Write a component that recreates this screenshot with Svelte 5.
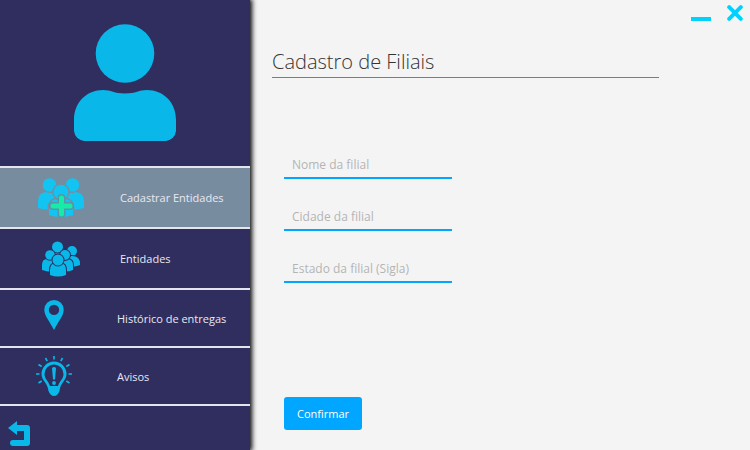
<script>
  const fields = [
    { id: 'nome', label: 'Nome da filial' },
    { id: 'cidade', label: 'Cidade da filial' },
    { id: 'estado', label: 'Estado da filial (Sigla)' }
  ];
</script>

<div class="window">
  <aside class="sidebar">
    <div class="avatar">
      <svg width="102" height="118" viewBox="0 0 102 118" aria-hidden="true">
        <circle cx="51" cy="29.500" r="29.300" />
        <path d="M0 96C0 78 13 66 29 66c8 0 11 3.500 22 3.500S65 66 73 66c16 0 29 12 29 30v11q-1 8-10 10H10q-9-2-10-10z" />
      </svg>
    </div>

    <nav>
      <button type="button" class="item active">
        <span class="icon">
          <svg width="48" height="40" viewBox="0 0 48 40" aria-hidden="true">
            <g class="bright">
              <circle cx="12.500" cy="7" r="6.800" />
              <circle cx="35.500" cy="7" r="6.800" />
              <path d="M1 30V23q0-8 8-9 4 2 8 0l3 2v15q-10 2-19-1z" />
              <path d="M47 30V23q0-8-8-9-4 2-8 0l-3 2v15q10 2 19-1z" />
            </g>
            <g class="bright cut-active">
              <path d="M12 37v-7q0-7 7-9 5 2 10 0 7 2 7 9v7q-12 4-24 0z" />
              <circle cx="24" cy="14" r="7.300" />
            </g>
            <path class="plus-edge" d="M24.500 20v16M16 28h17" />
            <path class="plus" d="M24.500 20v16M16 28h17" />
          </svg>
        </span>
        <span class="label">Cadastrar Entidades</span>
      </button>
      <button type="button" class="item">
        <span class="icon">
          <svg width="38" height="36" viewBox="0 0 38 36" aria-hidden="true">
            <g class="cut">
              <circle cx="30" cy="10" r="5" />
              <path d="M24 25v-5q1-5 6-5 8 0 8 8v1q-6 3-14 1z" />
              <path d="M9 18q1-7 6-7 6 0 7 7z" />
              <circle cx="15.500" cy="6" r="5.500" />
              <path d="M0 29v-5q0-6 5-6h6q5 1 5 6v6q-8 2-16-1z" />
              <circle cx="8" cy="14" r="4.800" />
              <path d="M15 29v-5q1-6 5-6h6q5 1 5 6v5q-8 3-16 0z" />
              <circle cx="23" cy="14" r="5" />
              <path d="M8 34v-5q0-6 5-7h6q5 1 5 7v5q-8 3-16 0z" />
              <circle cx="16" cy="19" r="5.500" />
            </g>
          </svg>
        </span>
        <span class="label">Entidades</span>
      </button>
      <button type="button" class="item compact">
        <span class="icon pin">
          <svg width="20" height="30" viewBox="0 0 20 30" aria-hidden="true">
            <path fill-rule="evenodd" d="M10 0a9.700 9.700 0 0 0-9.700 9.700C.3 16 6 21.500 10 30c4-8.500 9.700-14 9.700-20.300A9.700 9.700 0 0 0 10 0zm0 4.700a5.200 5.200 0 1 1 0 10.400 5.200 5.200 0 0 1 0-10.400z" />
          </svg>
        </span>
        <span class="label">Histórico de entregas</span>
      </button>
      <button type="button" class="item compact">
        <span class="icon">
          <svg width="36" height="40" viewBox="0 0 36 40" aria-hidden="true">
            <path fill-rule="evenodd" d="M18 5.500a12.500 12.500 0 0 0-12.500 12.500c0 7 6 8 7 17q2 5 5.500 5t5.500-5c1-9 7-10 7-17A12.500 12.500 0 0 0 18 5.500zm0 3a9.500 9.500 0 0 1 9.500 9.500c0 5-4 7-5.500 12h-8c-1.500-5-5.500-7-5.500-12A9.500 9.500 0 0 1 18 8.500z" />
            <path d="M16 12q2-2 4 0l-1 11.500h-2z" />
            <circle cx="18" cy="27" r="1.900" />
            <path class="rays" d="M18 0v3.500M9.500 2l1.700 3.200M26.500 2l-1.700 3.200M2.500 8.500l3.200 2M33.500 8.500l-3.200 2M0 18h3.500M36 18h-3.500M2.500 27l3.200-2M33.500 27l-3.200-2" />
          </svg>
        </span>
        <span class="label">Avisos</span>
      </button>
    </nav>

    <button type="button" class="back" aria-label="Voltar">
      <svg width="22" height="26" viewBox="0 0 22 26" aria-hidden="true">
        <path d="M0 7l9-7v4h10q3 0 3 3v15q0 3-3 3H5q-3 0-3-3t3-3h11v-9H9v4z" />
      </svg>
    </button>
  </aside>

  <main>
    <div class="controls">
      <button type="button" class="minimize" aria-label="Minimizar">
        <svg width="20" height="16" viewBox="0 0 20 16" aria-hidden="true"><path d="M0 12h20v4H0z" /></svg>
      </button>
      <button type="button" aria-label="Fechar">
        <svg width="16" height="16" viewBox="0 0 16 16" aria-hidden="true">
          <path class="cross" d="M2.200 2.200l11.600 11.600M13.800 2.200L2.200 13.800" />
        </svg>
      </button>
    </div>

    <h1>Cadastro de Filiais</h1>

    <form onsubmit={(event) => event.preventDefault()}>
      {#each fields as field}
        <input id={field.id} name={field.id} type="text" placeholder={field.label} aria-label={field.label} />
      {/each}
      <button type="submit" class="submit">Confirmar</button>
    </form>
  </main>
</div>

<style>
  :global(body) {
    margin: 0;
    background: #f4f4f4;
  }

  .window {
    display: grid;
    grid-template-columns: 250px 1fr;
    min-height: 100vh;
    font-family: "Open Sans", "Noto Sans", sans-serif;
    font-size: 11px;
    color: #333;
  }

  button,
  input {
    box-sizing: border-box;
    margin: 0;
    padding: 0;
    border: 0;
    background: none;
    font: inherit;
  }

  button {
    cursor: pointer;
  }

  svg {
    display: block;
    flex: none;
  }

  .sidebar {
    position: relative;
    display: flex;
    flex-direction: column;
    background: #2f2e5f;
    box-shadow: 1px 0 5px 1px #000;
    fill: #09b8e8;
  }

  .avatar {
    display: flex;
    justify-content: center;
    padding: 24px 0;
  }

  nav {
    display: flex;
    flex-direction: column;
    border-top: 2px solid #e4e4ee;
  }

  .item {
    display: flex;
    align-items: center;
    height: 61px;
    border-bottom: 2px solid #e4e4ee;
    color: #e8e8f0;
    text-align: left;
  }

  .compact {
    height: 58px;
  }

  .active {
    background: #788ca0;
  }

  .icon {
    display: flex;
    justify-content: center;
    width: 82px;
    padding-left: 20px;
    margin-right: 18px;
  }

  .compact .icon {
    width: 67px;
    margin-right: 30px;
  }

  .pin {
    padding-bottom: 6px;
  }

  .bright {
    fill: #12c4f2;
  }

  .cut,
  .cut-active {
    stroke: #2f2e5f;
    stroke-width: 2;
    paint-order: stroke;
  }

  .cut-active {
    stroke: #788ca0;
    stroke-width: 3;
  }

  .plus,
  .plus-edge {
    fill: none;
    stroke: #14eca8;
    stroke-width: 5;
    stroke-linecap: round;
  }

  .plus-edge {
    stroke: #5596a8;
    stroke-width: 8;
  }

  .rays {
    fill: none;
    stroke: #09b8e8;
    stroke-width: 1.6;
  }

  .back {
    align-self: flex-start;
    margin-top: auto;
    padding: 0 8px 3px;
  }

  main {
    padding: 5px 7px 20px 22px;
  }

  .controls {
    display: flex;
    justify-content: flex-end;
    gap: 16px;
    fill: #00d2ff;
  }

  .cross {
    fill: none;
    stroke: #00d2ff;
    stroke-width: 4;
    stroke-linecap: round;
  }

  h1 {
    margin: 26px 84px 0 0;
    border-bottom: 1px solid #0f9fe6;
    font-size: 20px;
    font-weight: 300;
    line-height: 30px;
  }

  form {
    display: flex;
    flex-direction: column;
    align-items: flex-start;
    gap: 20px;
    padding: 69px 12px 0;
  }

  input {
    width: 168px;
    height: 32px;
    padding: 4px 8px 0;
    border-bottom: 2px solid #00a6ff;
    border-radius: 0;
    color: #333;
    font-size: 12px;
    outline: none;
  }

  input::placeholder {
    color: #b4b4b4;
    opacity: 1;
  }

  .submit {
    height: 33px;
    margin-top: 94px;
    padding: 0 13px;
    border-radius: 3px;
    background: #00a6ff;
    color: #fff;
  }
</style>
